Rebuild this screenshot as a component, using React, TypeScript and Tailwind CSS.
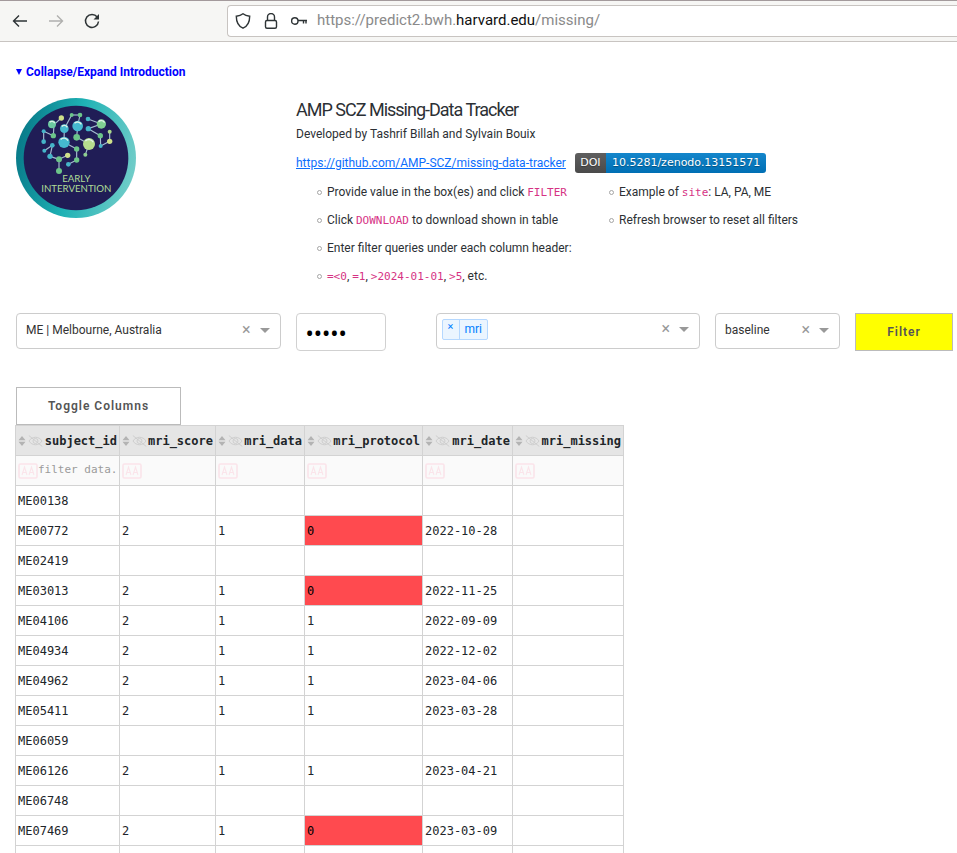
import type { ReactNode } from 'react';

const LINKS = [
  [144, 104, 166, 84], [144, 104, 142, 137], [142, 137, 113, 124], [113, 124, 113, 155],
  [175, 116, 197, 75], [197, 75, 222, 75], [222, 75, 215, 108], [215, 108, 212, 142],
  [246, 87, 286, 102], [286, 102, 247, 116], [247, 116, 283, 137], [283, 137, 284, 168],
  [284, 168, 311, 154], [311, 154, 311, 125], [212, 142, 249, 162], [249, 162, 238, 194],
  [175, 116, 174, 157], [174, 157, 212, 177], [212, 177, 212, 210], [212, 210, 187, 223],
  [115, 182, 139, 166], [139, 166, 132, 199], [132, 199, 159, 208], [159, 208, 185, 196],
  [159, 208, 159, 243],
];

const NODES: [number, number, number, string][] = [
  [138, 103, 12, '#6cc9a0'], [166, 84, 8, '#cfe08a'], [142, 137, 8, '#6cc58a'], [113, 124, 6, '#45b5c9'],
  [113, 155, 7, '#45b5c9'], [175, 116, 13, '#45b9cf'], [197, 75, 6, '#6cc58a'], [222, 75, 7, '#6cc58a'],
  [215, 108, 16, '#45b9cf'], [212, 142, 10, '#6cc58a'], [246, 87, 7, '#45b5c9'], [286, 102, 14, '#7fcf92'],
  [247, 116, 8, '#45b5c9'], [283, 137, 8, '#6cc58a'], [284, 168, 6, '#45b5c9'], [311, 154, 8, '#cfe08a'],
  [311, 125, 6, '#a9d78c'], [249, 162, 18, '#b5dc8e'], [238, 194, 6, '#8dce90'], [174, 157, 17, '#45b9cf'],
  [212, 177, 8, '#6cc58a'], [212, 210, 8, '#6cc58a'], [187, 223, 7, '#45b5c9'], [115, 182, 6, '#45b5c9'],
  [139, 166, 7, '#45b5c9'], [132, 199, 8, '#45b5c9'], [159, 208, 9, '#6cc58a'], [185, 196, 8, '#cfe08a'],
  [159, 243, 9, '#6cc58a'],
];

function Logo() {
  return (
    <svg viewBox="30 24 360 360" className="size-[120px]" role="img" aria-label="Early Intervention">
      <defs>
        <linearGradient id="ring" x1="0" y1="0.3" x2="1" y2="0.5">
          <stop offset="0" stopColor="#077787" />
          <stop offset="0.5" stopColor="#1fb2b5" />
          <stop offset="1" stopColor="#6fccc8" />
        </linearGradient>
      </defs>
      <circle cx="210" cy="204" r="180" fill="url(#ring)" />
      <circle cx="210" cy="204" r="157" fill="#201d56" />
      {LINKS.map(([x1, y1, x2, y2], i) => (
        <line key={i} x1={x1} y1={y1} x2={x2} y2={y2} stroke="#a5bdd0" strokeWidth="3.5" />
      ))}
      {NODES.map(([cx, cy, r, fill], i) => (
        <g key={i}>
          <circle cx={cx} cy={cy} r={r} fill={fill} />
          {r > 11 && (
            <path d={`M${cx - r * 0.6} ${cy - r * 0.5} A${r * 0.8} ${r * 0.8} 0 0 1 ${cx + r * 0.7} ${cy - r * 0.3}`} fill="none" stroke="#dff3e6" strokeWidth="4" />
          )}
        </g>
      ))}
      <g fill="#b0dd96" fontSize="29" textAnchor="middle" className="font-['Lato',sans-serif]">
        <text x="211" y="276">EARLY</text>
        <text x="211" y="307">INTERVENTION</text>
      </g>
    </svg>
  );
}

function BrowserBar() {
  return (
    <header className="flex h-[42px] shrink-0 items-center border-y border-t-[#a39a9c] border-b-[#c8c4c1] bg-[#f6f6f4] pl-3 text-[#2e3436]">
      <nav className="flex w-[215px] gap-5">
        <button aria-label="Back" className="size-4">
          <svg viewBox="0 0 16 16" fill="none" stroke="currentColor" strokeWidth="1.4"><path d="M15 8H1.5M7 2.500 1.500 8 7 13.500" /></svg>
        </button>
        <button aria-label="Forward" disabled className="size-4 text-[#b0b0ae]">
          <svg viewBox="0 0 16 16" fill="none" stroke="currentColor" strokeWidth="1.4"><path d="M1 8h13.500M9 2.500 14.500 8 9 13.500" /></svg>
        </button>
        <button aria-label="Reload" className="size-4">
          <svg viewBox="0 0 16 16" fill="none" stroke="currentColor" strokeWidth="1.5">
            <path d="M13.200 4A6.500 6.500 0 1 0 14.500 8.500" /><path d="M15 1v5.500H9.500z" fill="currentColor" stroke="none" />
          </svg>
        </button>
      </nav>
      <div className="flex h-8 flex-1 items-center gap-3 rounded-l border border-r-0 border-[#c8c4c1] bg-white pl-[7px]">
        <svg viewBox="0 0 16 16" className="size-4" fill="none" stroke="currentColor" strokeWidth="1.400"><path d="M8 .8C6 2.400 3.500 3 1.300 3.200c0 5.800 1.700 9.800 6.700 12 5-2.200 6.700-6.200 6.700-12C12.500 3 10 2.400 8 .8z" /></svg>
        <svg viewBox="0 0 16 16" className="size-4" fill="none" stroke="currentColor" strokeWidth="1.400"><rect x="2.500" y="7.500" width="11" height="7.800" rx="1.500" /><path d="M4.500 7.500V4a3.500 3.500 0 0 1 7 0v3.500" /></svg>
        <svg viewBox="0 0 16 16" className="size-4" fill="none" stroke="currentColor" strokeWidth="1.400"><circle cx="3.800" cy="8" r="3.200" /><path d="M7 7.500h9M12.500 7.500v3M15 7.500v3" /></svg>
        <span className="-ml-0.5 text-[15px] text-[#8a8a8a]">
          https://predict2.bwh.<span className="text-[#101010]">harvard.edu</span>/missing/
        </span>
      </div>
    </header>
  );
}

function Code({ children }: { children: ReactNode }) {
  return <code className="font-['DejaVu_Sans_Mono',monospace] text-[11px] leading-none text-[#d63384]">{children}</code>;
}

function Bullet({ children }: { children: ReactNode }) {
  return (
    <li className="before:mr-[5px] before:-ml-[10px] before:inline-block before:size-[5px] before:rounded-full before:border before:border-[#a5a5a5] before:align-middle before:content-['']">
      {children}
    </li>
  );
}

function Caret() {
  return <span className="pointer-events-none border-x-[5px] border-t-[5px] border-x-transparent border-t-[#999999]" />;
}

function Dropdown({ label, value }: { label: string; value: string }) {
  return (
    <div className="relative h-9 rounded border border-[#cccccc] bg-white">
      <select aria-label={label} className="h-8 w-full appearance-none bg-transparent pr-12 pl-[9px] text-xs text-[#333333] outline-none">
        <option>{value}</option>
      </select>
      <div className="absolute inset-y-0 right-[10px] flex items-center gap-[9px] pb-0.5">
        <button type="button" aria-label={`Clear ${label}`} className="text-base leading-4 text-[#999999]">×</button>
        <Caret />
      </div>
    </div>
  );
}

function Filters() {
  return (
    <form className="mt-[23px] grid grid-cols-[1fr_125px_1fr_125px_98px] gap-[15px]" onSubmit={(e) => e.preventDefault()}>
      <Dropdown label="Site" value="ME | Melbourne, Australia" />
      <input type="password" aria-label="Password" defaultValue="12345" className="h-[38px] w-[90px] rounded border border-[#d1d1d1] px-[9px] font-['Noto_Sans',sans-serif] text-[22px] text-black outline-none" />
      <div className="flex h-9 items-center rounded border border-[#cccccc] bg-white pr-[10px] pb-1 pl-[5px]">
        <span className="flex h-[21px] items-center rounded-xs border border-[#b5d8ff] bg-[#ebf5ff] text-xs text-[#007eff]">
          <button type="button" aria-label="Remove mri" className="h-full w-[17px] border-r border-[#b5d8ff] pb-1 text-[11px] leading-3">×</button>
          <span className="px-[5px]">mri</span>
        </span>
        <input aria-label="Data type" className="w-0 flex-1 outline-none" />
        <span className="flex items-center gap-[9px]">
          <button type="button" aria-label="Clear data type" className="text-base leading-4 text-[#999999]">×</button>
          <Caret />
        </span>
      </div>
      <Dropdown label="Timepoint" value="baseline" />
      <button className="h-[38px] border border-[#bbbbbb] bg-[#ffff00] text-xs font-semibold tracking-[1px] text-[#555555]">Filter</button>
    </form>
  );
}

const COLUMNS = [
  { name: 'subject_id', width: 'w-[104px]' },
  { name: 'mri_score', width: 'w-[96px]' },
  { name: 'mri_data', width: 'w-[89px]' },
  { name: 'mri_protocol', width: 'w-[118px]' },
  { name: 'mri_date', width: 'w-[90px]' },
  { name: 'mri_missing', width: 'w-[111px]' },
];

const ROWS = [
  ['ME00138', '', '', '', '', ''],
  ['ME00772', '2', '1', '0', '2022-10-28', ''],
  ['ME02419', '', '', '', '', ''],
  ['ME03013', '2', '1', '0', '2022-11-25', ''],
  ['ME04106', '2', '1', '1', '2022-09-09', ''],
  ['ME04934', '2', '1', '1', '2022-12-02', ''],
  ['ME04962', '2', '1', '1', '2023-04-06', ''],
  ['ME05411', '2', '1', '1', '2023-03-28', ''],
  ['ME06059', '', '', '', '', ''],
  ['ME06126', '2', '1', '1', '2023-04-21', ''],
  ['ME06748', '', '', '', '', ''],
  ['ME07469', '2', '1', '0', '2023-03-09', ''],
  ['', '', '', '', '', ''],
];

function SortIcon() {
  return (
    <svg viewBox="0 0 8 12" className="h-3 w-2" fill="#b3b3b3"><path d="M4 1 7.500 5.200H.5zM4 11 .5 6.800h7z" /></svg>
  );
}

function EyeSlash() {
  return (
    <svg viewBox="0 0 15 12" className="h-3 w-[15px]" fill="none" stroke="#cecece" strokeWidth="1">
      <path d="M1 6c3-5 10-5 13 0-3 5-10 5-13 0zM.8.5l13.500 11" /><circle cx="7.500" cy="6" r="2.500" />
    </svg>
  );
}

function CaseIcon() {
  return (
    <svg viewBox="0 0 20 16" className="h-4 w-5" fill="none" stroke="#fbe4ea">
      <rect x="1" y="1" width="18" height="14" rx="1.500" strokeWidth="1.600" />
      <path d="M4 12 6.500 4 9 12M4.800 9.500h3.400M11 12l2.500-8 2.500 8M11.800 9.500h3.400" strokeWidth="1.100" />
    </svg>
  );
}

function DataTable() {
  return (
    <table className="-ml-px w-[609px] table-fixed border-collapse font-['DejaVu_Sans_Mono',monospace] text-xs text-[#212529]">
      <thead>
        <tr className="h-[30px] bg-[#e5e5e5]">
          {COLUMNS.map((c) => (
            <th key={c.name} className={`border border-[#d3d3d3] p-0 font-bold ${c.width}`}>
              <div className="flex items-center justify-between px-[2px]">
                <span className="flex items-center gap-[2px]">
                  <button aria-label={`Sort ${c.name}`}><SortIcon /></button>
                  <button aria-label={`Hide ${c.name}`}><EyeSlash /></button>
                </span>
                <span>{c.name}</span>
              </div>
            </th>
          ))}
        </tr>
        <tr className="h-[30px] bg-[#fafafa]">
          {COLUMNS.map((c, i) => (
            <td key={c.name} className="border border-[#d3d3d3] p-0">
              <div className="flex items-center pl-[2px]">
                <button aria-label={`Case sensitivity ${c.name}`}><CaseIcon /></button>
                <input aria-label={`Filter ${c.name}`} placeholder={i === 0 ? 'filter data.' : ''} className="w-0 flex-1 text-[11px] outline-none placeholder:text-[#9a9a9a]" />
              </div>
            </td>
          ))}
        </tr>
      </thead>
      <tbody>
        {ROWS.map((row, r) => (
          <tr key={r} className="h-[30px]">
            {row.map((cell, i) => (
              <td key={i} className={`border border-[#d3d3d3] px-[2px] py-0 ${i === 3 && cell === '0' ? 'bg-[#ff4a4f] text-black' : ''}`}>{cell}</td>
            ))}
          </tr>
        ))}
      </tbody>
    </table>
  );
}

export default function App() {
  return (
    <div className="flex h-screen flex-col overflow-hidden bg-white font-['Roboto',sans-serif] text-xs text-[#2c3034]">
      <BrowserBar />
      <main className="min-h-0 flex-1 overflow-hidden pt-5 pr-1 pl-4">
        <details open>
          <summary className="flex h-5 cursor-pointer list-none items-center gap-1 font-bold text-[#0000ff]">
            <svg viewBox="0 0 6 6" className="size-1.5" fill="currentColor"><path d="M0 0h6L3 6z" /></svg>
            Collapse/Expand Introduction
          </summary>
          <div className="mt-4 flex">
            <div className="w-[280px] shrink-0"><Logo /></div>
            <div className="flex-1">
              <h1 className="text-lg leading-6 tracking-[-1px]">AMP SCZ Missing-Data Tracker</h1>
              <p className="leading-6">Developed by Tashrif Billah and Sylvain Bouix</p>
              <p className="mt-[5px] flex h-6 items-center gap-[9px]">
                <a href="https://github.com/AMP-SCZ/missing-data-tracker" className="text-[#0d6efd] underline">https://github.com/AMP-SCZ/missing-data-tracker</a>
                <a href="https://doi.org/10.5281/zenodo.13151571" className="flex h-5 overflow-hidden rounded-[3px] font-['DejaVu_Sans',sans-serif] text-[11px] leading-5 text-white [text-shadow:0_1px_1px_#01010155]">
                  <span className="w-[31px] bg-linear-to-b from-[#5f5f5f] to-[#4a4a4a] text-center">DOI</span>
                  <span className="bg-linear-to-b from-[#1486cb] to-[#006fb4] px-[6px]">10.5281/zenodo.13151571</span>
                </a>
              </p>
              <div className="mt-[3px] flex leading-7">
                <ul className="w-[292px] shrink-0 pl-[31px]">
                  <Bullet>Provide value in the box(es) and click <Code>FILTER</Code></Bullet>
                  <Bullet>Click <Code>DOWNLOAD</Code> to download shown in table</Bullet>
                  <Bullet>Enter filter queries under each column header:</Bullet>
                  <Bullet><Code>=&lt;0</Code>, <Code>=1</Code>, <Code>&gt;2024-01-01</Code>, <Code>&gt;5</Code>, etc.</Bullet>
                </ul>
                <ul className="pl-[31px]">
                  <Bullet>Example of <Code>site</Code>: LA, PA, ME</Bullet>
                  <Bullet>Refresh browser to reset all filters</Bullet>
                </ul>
              </div>
            </div>
          </div>
        </details>
        <Filters />
        <button className="mt-9 block h-[38px] w-[165px] border border-[#bbbbbb] text-xs font-semibold tracking-[1px] text-[#555555]">Toggle Columns</button>
        <DataTable />
      </main>
    </div>
  );
}
